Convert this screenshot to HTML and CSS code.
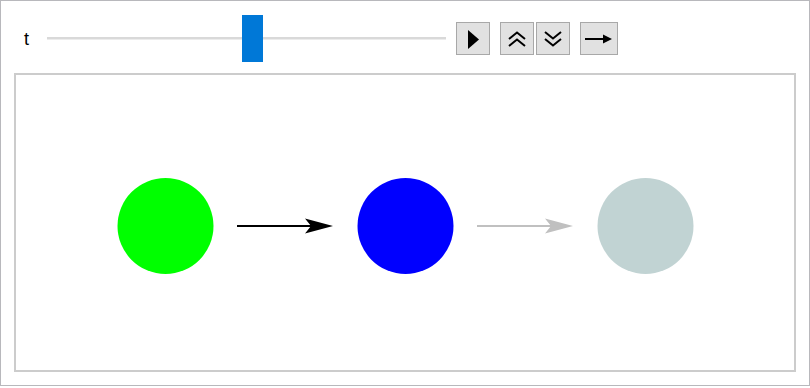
FILE: index.html
```html
<!DOCTYPE html>
<html>
<head>
<meta charset="utf-8">
<link rel="stylesheet" href="styles.css">
</head>
<body>
<div class="frame">
  <div class="controls">
    <span class="label">t</span>
    <div class="slider">
      <div class="track"></div>
      <div class="thumb" style="left: 195px"></div>
    </div>
    <button class="btn btn-play" type="button" aria-label="Play">
      <svg width="11" height="19" viewBox="0 0 11 19"><polygon points="0,0 11,9.5 0,19" fill="#000"/></svg>
    </button>
    <div class="pair">
      <button class="btn" type="button" aria-label="Faster">
        <svg width="20" height="16" viewBox="0 0 20 16"><polyline points="2,8 10,1.5 18,8" fill="none" stroke="#000" stroke-width="2"/><polyline points="2,15 10,8.5 18,15" fill="none" stroke="#000" stroke-width="2"/></svg>
      </button>
      <button class="btn" type="button" aria-label="Slower">
        <svg width="20" height="16" viewBox="0 0 20 16"><polyline points="2,1 10,7.5 18,1" fill="none" stroke="#000" stroke-width="2"/><polyline points="2,8 10,14.5 18,8" fill="none" stroke="#000" stroke-width="2"/></svg>
      </button>
    </div>
    <button class="btn btn-dir" type="button" aria-label="Direction">
      <svg width="28" height="10" viewBox="0 0 28 10"><line x1="0" y1="5" x2="21" y2="5" stroke="#000" stroke-width="2"/><polygon points="27,5 18,0.5 18,9.5" fill="#000"/></svg>
    </button>
  </div>
  <div class="panel">
    <svg class="graph" width="778" height="295" viewBox="0 0 778 295">
      <circle cx="149.5" cy="151" r="48" fill="#00ff00"/>
      <line x1="221" y1="151" x2="296" y2="151" stroke="#000" stroke-width="2"/>
      <path d="M317,151 L289,143.5 L295,151 L289,158.5 Z" fill="#000"/>
      <circle cx="389.5" cy="151" r="48" fill="#0000ff"/>
      <line x1="461" y1="151" x2="536" y2="151" stroke="#c0c0c0" stroke-width="2"/>
      <path d="M557,151 L529,143.5 L535,151 L529,158.5 Z" fill="#c0c0c0"/>
      <circle cx="629.5" cy="151" r="48" fill="#c1d3d3"/>
    </svg>
  </div>
</div>
</body>
</html>
```
FILE: styles.css
```css
html, body {
  margin: 0;
  padding: 0;
  background: #fff;
}
.frame {
  box-sizing: border-box;
  width: 810px;
  height: 386px;
  border: 1px solid #b8b8bc;
  display: flex;
  flex-direction: column;
  font-family: "Liberation Sans", Arial, sans-serif;
}
.controls {
  box-sizing: border-box;
  height: 72px;
  padding: 3px 0 0 23px;
  display: flex;
  align-items: center;
}
.label {
  width: 23px;
  font-size: 18px;
  color: #000;
  line-height: 1;
}
.slider {
  position: relative;
  width: 399px;
  height: 46px;
  display: flex;
  align-items: center;
}
.track {
  width: 100%;
  height: 3px;
  background: #d9d9d9;
  border-bottom: 1px solid #ececec;
  box-sizing: border-box;
}
.thumb {
  position: absolute;
  top: -1px;
  width: 21px;
  height: 47px;
  background: #0078d7;
}
.btn {
  box-sizing: border-box;
  width: 34px;
  height: 33px;
  margin: 0;
  padding: 0;
  border: 1px solid #a8a8a8;
  border-radius: 0;
  background: #e1e1e1;
  display: flex;
  align-items: center;
  justify-content: center;
}
.btn svg {
  display: block;
}
.btn-play {
  margin-left: 10px;
}
.btn-play svg {
  margin-top: 1px;
}
.pair {
  display: flex;
  gap: 2px;
  margin-left: 10px;
}
.btn-dir {
  width: 38px;
  margin-left: 10px;
}
.panel {
  box-sizing: border-box;
  margin: 0 13px;
  height: 299px;
  border: 2px solid #cccccc;
}
.graph {
  display: block;
}
```
